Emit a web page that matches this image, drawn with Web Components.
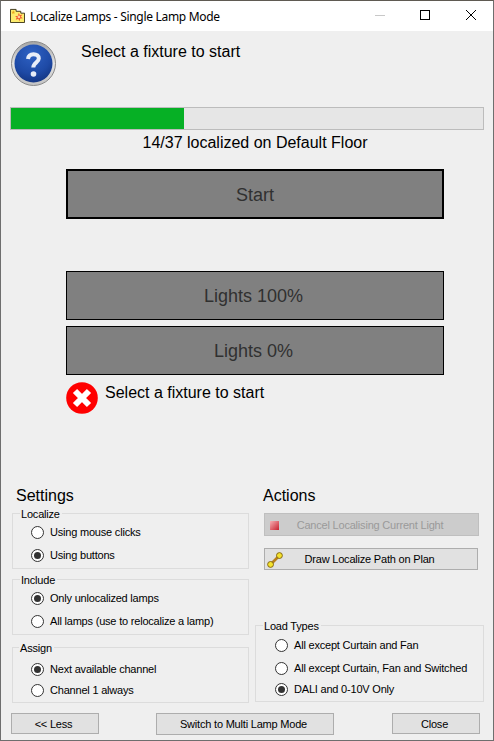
<!DOCTYPE html>
<html>
<head>
<meta charset="utf-8">
<title>Localize Lamps</title>
<style>
html, body { margin: 0; padding: 0; background: #efefef; }
body { font-family: "Liberation Sans", Arial, sans-serif; }
</style>
</head>
<body>
<lamp-window>
    <lamp-titlebar slot="title">Localize Lamps - Single Lamp Mode</lamp-titlebar>

    <lamp-prompt>Select a fixture to start</lamp-prompt>
    <lamp-progress percent="36.7">14/37 localized on Default Floor</lamp-progress>

    <lamp-bigbutton heavy style="margin-top: 16px; height: 50px;">Start</lamp-bigbutton>
    <lamp-bigbutton style="margin-top: 52px;">Lights 100%</lamp-bigbutton>
    <lamp-bigbutton style="margin-top: 6px;">Lights 0%</lamp-bigbutton>
    <lamp-error>Select a fixture to start</lamp-error>

    <lamp-panels>
        <div slot="left">
            <lamp-group label="Localize" style="height: 56px;">
                <lamp-radio style="margin-top: 4px;">Using mouse clicks</lamp-radio>
                <lamp-radio checked style="margin-top: 9px;">Using buttons</lamp-radio>
            </lamp-group>
            <lamp-group label="Include" style="height: 56px; margin-top: 10px;">
                <lamp-radio checked style="margin-top: 4px;">Only unlocalized lamps</lamp-radio>
                <lamp-radio style="margin-top: 9px;">All lamps (use to relocalize a lamp)</lamp-radio>
            </lamp-group>
            <lamp-group label="Assign" style="height: 56px; margin-top: 12px; --legend-x: -12px;">
                <lamp-radio checked style="margin-top: 7px;">Next available channel</lamp-radio>
                <lamp-radio style="margin-top: 7px;">Channel 1 always</lamp-radio>
            </lamp-group>
        </div>
        <div slot="right">
            <lamp-button disabled icon="stop" style="width: 215px; height: 23px;">Cancel Localising Current Light</lamp-button>
            <lamp-button icon="path" style="width: 214px; height: 22px; margin-top: 12px;">Draw Localize Path on Plan</lamp-button>
            <lamp-group label="Load Types" wide style="height: 77px; margin-top: 55px; margin-left: -9px; --legend-x: -12px;">
                <lamp-radio style="margin-top: 5px;">All except Curtain and Fan</lamp-radio>
                <lamp-radio style="margin-top: 9px;">All except Curtain, Fan and Switched</lamp-radio>
                <lamp-radio checked style="margin-top: 7px;">DALI and 0-10V Only</lamp-radio>
            </lamp-group>
        </div>
    </lamp-panels>

    <lamp-footer>
        <lamp-button style="width: 88px; height: 21px;">&lt;&lt; Less</lamp-button>
        <lamp-button style="width: 178px; height: 22px; margin-left: 57px;">Switch to Multi Lamp Mode</lamp-button>
        <lamp-button style="width: 88px; height: 21px; margin-left: auto;">Close</lamp-button>
    </lamp-footer>
</lamp-window>

<script>
class LampWindow extends HTMLElement {
    constructor() {
        super();
        const shadow = this.attachShadow({ mode: 'open' });
        shadow.innerHTML = `
            <style>
                :host {
                    display: block;
                    box-sizing: border-box;
                    width: 494px;
                    height: 741px;
                    overflow: hidden;
                    background: #efefef;
                    border: 1px solid #6e6e6e;
                    border-top-color: #5f5a52;
                    font-family: "Liberation Sans", Arial, sans-serif;
                    color: #000;
                }
                .client {
                    display: flex;
                    flex-direction: column;
                }
            </style>
            <slot name="title"></slot>
            <div class="client"><slot></slot></div>
        `;
    }
}

class LampTitlebar extends HTMLElement {
    constructor() {
        super();
        const shadow = this.attachShadow({ mode: 'open' });
        shadow.innerHTML = `
            <style>
                :host {
                    display: flex;
                    align-items: center;
                    height: 30px;
                    background: #fff;
                    font: 12px "Noto Sans", "Open Sans", sans-serif;
                    letter-spacing: -0.3px;
                    color: #000;
                }
                .app { width: 15px; height: 15px; margin: -1px 0 0 9px; flex: none; }
                .text { margin-left: 5px; flex: 1; white-space: nowrap; }
                .ctl { width: 46px; height: 30px; padding-top: 9px; box-sizing: border-box; display: flex; justify-content: center; flex: none; }
                .ctl.close { width: 44px; }
                .ctl.max svg { margin-right: 2px; }
                svg { display: block; }
            </style>
            <svg class="app" viewBox="0 0 16 16">
                <path d="M.5 1.500h6v2h5v2h4v10H.5z" fill="#fdec6e" stroke="#3c3418"/>
                <path d="M9.500 5l.9 2.700 2.800-.9-1.700 2.500 2.200 1.700-2.900.1-.7 3-1.200-2.700-2.700 1.200 1-2.800L5.300 8.400l3 .1z" fill="#f2542c"/>
                <circle cx="9.500" cy="9.500" r="1.500" fill="#ffd09a"/>
                <path d="M3.500 2.500l.6 1.400 1.400.1-1.100 1 .4 1.500-1.300-.8-1.300.8.4-1.500-1-1 1.400-.1z" fill="#e9a81c"/>
            </svg>
            <span class="text"><slot></slot></span>
            <span class="ctl">
                <svg width="10" height="10" viewBox="0 0 10 10"><path d="M0 5.500h10" stroke="#c8c8c8"/></svg>
            </span>
            <span class="ctl max">
                <svg width="10" height="10" viewBox="0 0 10 10"><rect x=".5" y=".5" width="9" height="9" fill="none" stroke="#000"/></svg>
            </span>
            <span class="ctl close">
                <svg width="10" height="10" viewBox="0 0 10 10"><path d="M0 0l10 10M10 0L0 10" stroke="#000" fill="none"/></svg>
            </span>
        `;
    }
}

class LampPrompt extends HTMLElement {
    constructor() {
        super();
        const shadow = this.attachShadow({ mode: 'open' });
        shadow.innerHTML = `
            <style>
                :host {
                    display: flex;
                    align-items: flex-start;
                    padding: 10px 0 0 10px;
                    height: 56px;
                    font-size: 16px;
                }
                svg { width: 46px; height: 46px; flex: none; }
                .text { margin: 1px 0 0 24px; line-height: 20px; }
            </style>
            <svg viewBox="0 0 46 46">
                <defs>
                    <linearGradient id="ring" x1="0" y1="0" x2="0" y2="1">
                        <stop offset="0" stop-color="#a4a4a4"/>
                        <stop offset=".5" stop-color="#e4e4e4"/>
                        <stop offset="1" stop-color="#c2c2c2"/>
                    </linearGradient>
                    <radialGradient id="ball" cx=".45" cy=".25" r=".85">
                        <stop offset="0" stop-color="#2f62c4"/>
                        <stop offset=".6" stop-color="#1e4aa6"/>
                        <stop offset="1" stop-color="#102f78"/>
                    </radialGradient>
                </defs>
                <circle cx="22.500" cy="22.500" r="22" fill="url(#ring)" stroke="#8a8a8a"/>
                <circle cx="22.500" cy="22.500" r="19" fill="url(#ball)"/>
                <path d="M17 18c.4-3.400 2.800-4.800 5.500-4.800 3.200 0 5.300 1.800 5.300 4.300 0 3.800-5.500 4.300-5.500 9" fill="none" stroke="#e8edf8" stroke-width="4"/>
                <circle cx="22.500" cy="33" r="2.800" fill="#e8edf8"/>
            </svg>
            <span class="text"><slot></slot></span>
        `;
    }
}

class LampProgress extends HTMLElement {
    constructor() {
        super();
        const shadow = this.attachShadow({ mode: 'open' });
        const pct = this.getAttribute('percent');
        shadow.innerHTML = `
            <style>
                :host { display: block; margin: 10px 9px 0 9px; font-size: 16px; }
                .track {
                    box-sizing: border-box;
                    height: 23px;
                    background: #e6e6e6;
                    border: 1px solid #bcbcbc;
                }
                .fill { height: 100%; background: #06b025; width: ${pct}%; }
                .label { text-align: center; line-height: 20px; margin: 3px 0 0 16px; }
            </style>
            <div class="track"><div class="fill"></div></div>
            <div class="label"><slot></slot></div>
        `;
    }
}

class LampBigbutton extends HTMLElement {
    constructor() {
        super();
        const shadow = this.attachShadow({ mode: 'open' });
        shadow.innerHTML = `
            <style>
                :host {
                    display: flex;
                    align-items: center;
                    justify-content: center;
                    box-sizing: border-box;
                    width: 378px;
                    height: 49px;
                    margin-left: 65px;
                    padding: 2px 3px 0 0;
                    background: #808080;
                    border: 1px solid #000;
                    color: #303030;
                    font-size: 18px;
                }
                :host([heavy]) { border-width: 2px; padding-right: 0; }
            </style>
            <slot></slot>
        `;
    }
}

class LampError extends HTMLElement {
    constructor() {
        super();
        const shadow = this.attachShadow({ mode: 'open' });
        shadow.innerHTML = `
            <style>
                :host {
                    display: flex;
                    align-items: flex-start;
                    margin: 7px 0 0 65px;
                    height: 104px;
                    font-size: 16px;
                }
                svg { width: 32px; height: 32px; flex: none; }
                .text { margin-left: 7px; line-height: 20px; margin-top: 1px; }
            </style>
            <svg viewBox="0 0 32 32">
                <circle cx="16" cy="16" r="15.800" fill="#f00"/>
                <path d="M9 9l14 14M23 9L9 23" stroke="#fff" stroke-width="6" stroke-linecap="butt"/>
            </svg>
            <span class="text"><slot></slot></span>
        `;
    }
}

class LampPanels extends HTMLElement {
    constructor() {
        super();
        const shadow = this.attachShadow({ mode: 'open' });
        shadow.innerHTML = `
            <style>
                :host {
                    display: grid;
                    grid-template-columns: 237px 220px;
                    column-gap: 15px;
                    padding-left: 11px;
                }
                h2 {
                    margin: 0;
                    font-weight: normal;
                    font-size: 16px;
                    line-height: 20px;
                }
                .head { height: 20px; }
                .left-head { padding-left: 4px; }
                .right-head { margin-left: -1px; }
                .body { margin-top: 7px; }
            </style>
            <div class="head left-head"><h2>Settings</h2></div>
            <div class="head right-head"><h2>Actions</h2></div>
            <div class="body"><slot name="left"></slot></div>
            <div class="body"><slot name="right"></slot></div>
        `;
    }
}

class LampGroup extends HTMLElement {
    constructor() {
        super();
        const shadow = this.attachShadow({ mode: 'open' });
        shadow.innerHTML = `
            <style>
                :host {
                    display: block;
                    box-sizing: border-box;
                    border: 1px solid #dcdcdc;
                    padding: 0 0 0 18px;
                    font-size: 11px;
                    letter-spacing: -0.2px;
                }
                :host([wide]) { width: 229px; padding-left: 19px; }
                .legend {
                    display: block;
                    width: fit-content;
                    height: 14px;
                    line-height: 14px;
                    margin: -7px 0 0 var(--legend-x, -11px);
                    padding: 0 2px 0 1px;
                    background: #efefef;
                }
            </style>
            <div class="legend">${this.getAttribute('label')}</div>
            <div class="inner"><slot></slot></div>
        `;
    }
}

class LampRadio extends HTMLElement {
    constructor() {
        super();
        const shadow = this.attachShadow({ mode: 'open' });
        const dot = this.hasAttribute('checked') ? '<circle cx="6.500" cy="6.500" r="3.500" fill="#333"/>' : '';
        shadow.innerHTML = `
            <style>
                :host {
                    display: flex;
                    align-items: center;
                    gap: 6px;
                    height: 14px;
                    font-size: 11px;
                    letter-spacing: -0.2px;
                    white-space: nowrap;
                }
                svg { width: 13px; height: 13px; flex: none; }
            </style>
            <svg viewBox="0 0 13 13">
                <circle cx="6.500" cy="6.500" r="6" fill="#fff" stroke="#333"/>
                ${dot}
            </svg>
            <span><slot></slot></span>
        `;
    }
}

class LampButton extends HTMLElement {
    constructor() {
        super();
        const shadow = this.attachShadow({ mode: 'open' });
        const kind = this.getAttribute('icon');
        let icon = '';
        if (kind === 'stop') {
            icon = `<svg class="icon stop" viewBox="0 0 9 9">
                <defs><linearGradient id="s" x1="0" y1="0" x2="1" y2="1">
                    <stop offset="0" stop-color="#f6b0b4"/><stop offset="1" stop-color="#c8202e"/>
                </linearGradient></defs>
                <rect width="9" height="9" fill="url(#s)"/>
            </svg>`;
        } else if (kind === 'path') {
            icon = `<svg class="icon pathicon" viewBox="0 0 18 18">
                <path d="M4 14L14 4" stroke="#b8801c" stroke-width="3"/>
                <circle cx="4" cy="14" r="3.300" fill="#f4e22c" stroke="#7a5c10"/>
                <circle cx="14" cy="4" r="3.300" fill="#f4e22c" stroke="#7a5c10"/>
            </svg>`;
        }
        shadow.innerHTML = `
            <style>
                :host {
                    display: flex;
                    align-items: center;
                    justify-content: center;
                    position: relative;
                    box-sizing: border-box;
                    padding-right: 3px;
                    background: #e1e1e1;
                    border: 1px solid #adadad;
                    font-size: 11px;
                    letter-spacing: -0.2px;
                    color: #000;
                    white-space: nowrap;
                }
                :host([disabled]) {
                    background: #cccccc;
                    border-color: #bfbfbf;
                    color: #9a9a9a;
                }
                .icon { position: absolute; }
                .stop { width: 9px; height: 9px; left: 5px; top: 7px; }
                .pathicon { width: 16px; height: 16px; left: 2px; top: 3px; }
            </style>
            ${icon}
            <span><slot></slot></span>
        `;
    }
}

class LampFooter extends HTMLElement {
    constructor() {
        super();
        const shadow = this.attachShadow({ mode: 'open' });
        shadow.innerHTML = `
            <style>
                :host {
                    display: flex;
                    align-items: flex-start;
                    width: 469px;
                    margin: 10px 0 0 10px;
                }
            </style>
            <slot></slot>
        `;
    }
}

customElements.define('lamp-window', LampWindow);
customElements.define('lamp-titlebar', LampTitlebar);
customElements.define('lamp-prompt', LampPrompt);
customElements.define('lamp-progress', LampProgress);
customElements.define('lamp-bigbutton', LampBigbutton);
customElements.define('lamp-error', LampError);
customElements.define('lamp-panels', LampPanels);
customElements.define('lamp-group', LampGroup);
customElements.define('lamp-radio', LampRadio);
customElements.define('lamp-button', LampButton);
customElements.define('lamp-footer', LampFooter);
</script>
</body>
</html>
